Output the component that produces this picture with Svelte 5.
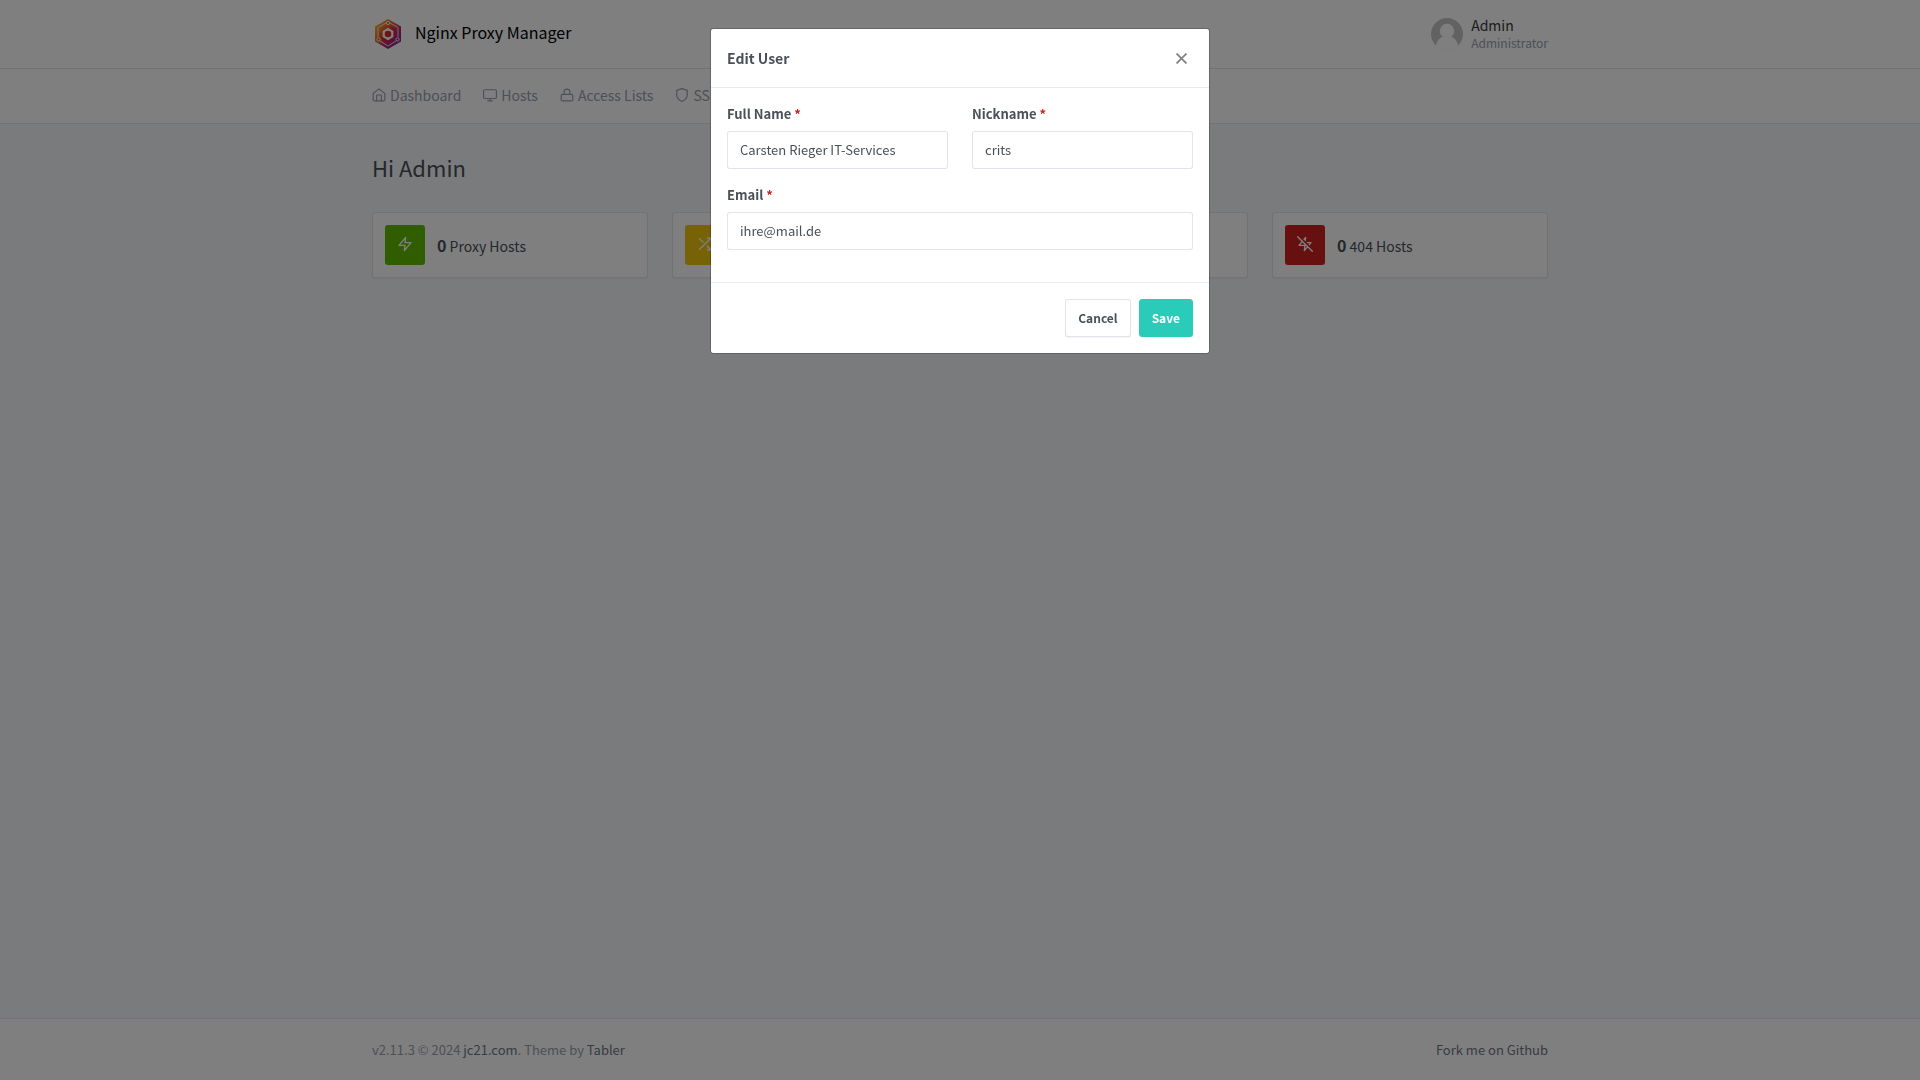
<script>
    // top navigation entries
    const nav = [
        { icon: "home", title: "Dashboard" },
        { icon: "monitor", title: "Hosts" },
        { icon: "lock", title: "Access Lists" },
        { icon: "shield", title: "SSL Certificates" },
    ];

    // dashboard counters
    const stats = [
        { icon: "zap", color: "green", count: 0, title: "Proxy Hosts" },
        { icon: "shuffle", color: "yellow" },
        {},
        { icon: "zap-off", color: "red", count: 0, title: "404 Hosts" },
    ];

    let name = $state("Carsten Rieger IT-Services");
    let nickname = $state("crits");
    let email = $state("ihre@mail.de");
</script>

<svelte:head>
    <title>Nginx Proxy Manager</title>
</svelte:head>

{#snippet icon(type)}
    <svg class="icon" viewBox="0 0 24 24" aria-hidden="true">
        {#if type === "home"}
            <path d="M2 9.500V20a2 2 0 0 0 2 2h16a2 2 0 0 0 2-2V9.500L12 1.500z" />
            <path d="M8 22V12h8v10" />
        {:else if type === "monitor"}
            <rect x="1" y="3" width="22" height="15" rx="2" />
            <path d="M8 22h8M12 18v4" />
        {:else if type === "lock"}
            <rect x="2" y="11" width="20" height="11" rx="2" />
            <path d="M7 11V7a5 5 0 0 1 10 0v4" />
        {:else if type === "shield"}
            <path d="M12 23s9-4 9-11V4l-9-3-9 3v8c0 7 9 11 9 11z" />
        {:else if type === "zap"}
            <path d="M13 2L3 14h9l-1 8 10-12h-9z" />
        {:else if type === "shuffle"}
            <path d="M16 3h5v5M4 20L21 3M21 16v5h-5M15 15l6 6M4 4l5 5" />
        {:else if type === "zap-off"}
            <path d="M12.400 6.800L13 2l-2.400 2.900M18.600 12.900L21 10h-5.300M8 8l-5 6h9l-1 8 5-6M1 1l22 22" />
        {/if}
    </svg>
{/snippet}

<div class="page">
    <header class="header">
        <div class="container">
            <a class="brand" href="/">
                <svg class="logo" viewBox="0 0 32 32" aria-hidden="true">
                    <defs>
                        <linearGradient id="rim" x1="0" y1="0" x2="1" y2="1">
                            <stop offset="0" stop-color="#ffc81f" />
                            <stop offset="0.4" stop-color="#e8662b" />
                            <stop offset="0.65" stop-color="#b52378" />
                            <stop offset="1" stop-color="#662d91" />
                        </linearGradient>
                        <linearGradient id="disc" x1="0" y1="0" x2="1" y2="1">
                            <stop offset="0" stop-color="#f7931e" />
                            <stop offset="0.5" stop-color="#e0262e" />
                            <stop offset="1" stop-color="#93278f" />
                        </linearGradient>
                    </defs>
                    <path fill="url(#rim)" d="M16 1l13 7.500v15L16 31 3 23.500v-15z" />
                    <path fill="none" stroke="#f3dfe6" stroke-width="1" d="M14 5L6 9.500V19M18 5l8 4.500V19M8 23l8 5 8-5" />
                    <circle cx="16" cy="16" r="8.500" fill="url(#disc)" />
                    <path fill="#fff" d="M16 9.800l5.400 3.100v6.200L16 22.200l-5.400-3.100v-6.200z" />
                    <circle cx="16" cy="16" r="3.300" fill="#e0262e" />
                    <g fill="#d8542f" stroke="#fff" stroke-width="1">
                        <circle cx="16" cy="5" r="1.600" />
                        <circle cx="6.500" cy="21.500" r="1.600" />
                        <circle cx="25.500" cy="21.500" r="1.600" fill="#93278f" />
                    </g>
                </svg>
                <span>Nginx Proxy Manager</span>
            </a>
            <a class="account" href="/profile">
                <svg class="avatar" viewBox="0 0 32 32" aria-hidden="true">
                    <circle cx="16" cy="16" r="16" fill="#c5c5c5" />
                    <circle cx="16" cy="13" r="7.200" fill="#fff" />
                    <path fill="#fff" d="M4.800 27.500C6 22.500 9 19.500 12 18.500h8c3 1 6 4 7.200 9C24 30.500 20 32 16 32S8 30.500 4.800 27.500z" />
                </svg>
                <span class="who">
                    <span>Admin</span>
                    <small>Administrator</small>
                </span>
            </a>
        </div>
    </header>

    <nav class="menu">
        <div class="container">
            <ul>
                {#each nav as item}
                    <li><a href="/">{@render icon(item.icon)}{item.title}</a></li>
                {/each}
            </ul>
        </div>
    </nav>

    <main class="container">
        <h1>Hi Admin</h1>
        <div class="cards">
            {#each stats as stat}
                <div class="card">
                    {#if stat.icon}
                        <span class="stamp {stat.color}">{@render icon(stat.icon)}</span>
                    {/if}
                    {#if stat.title}
                        <a href="/"><b>{stat.count}</b> {stat.title}</a>
                    {/if}
                </div>
            {/each}
        </div>
    </main>

    <footer class="footer">
        <div class="container">
            <div>v2.11.3 © 2024 <a href="/">jc21.com</a>. Theme by <a href="/">Tabler</a></div>
            <a href="/">Fork me on Github</a>
        </div>
    </footer>
</div>

<div class="backdrop">
    <div class="modal" role="dialog" aria-modal="true" aria-labelledby="modal-title">
        <div class="modal-header">
            <h5 id="modal-title">Edit User</h5>
            <button type="button" class="close" aria-label="Close">
                <svg viewBox="0 0 10 10" aria-hidden="true"><path d="M0.500 0.500l9 9M9.500 0.500l-9 9" /></svg>
            </button>
        </div>
        <form>
            <div class="modal-body">
                <div class="group">
                    <label for="name">Full Name <span class="required">*</span></label>
                    <input id="name" type="text" bind:value={name} required />
                </div>
                <div class="group">
                    <label for="nickname">Nickname <span class="required">*</span></label>
                    <input id="nickname" type="text" bind:value={nickname} required />
                </div>
                <div class="group wide">
                    <label for="email">Email <span class="required">*</span></label>
                    <input id="email" type="email" bind:value={email} required />
                </div>
            </div>
            <div class="modal-footer">
                <button type="button" class="btn">Cancel</button>
                <button type="button" class="btn save">Save</button>
            </div>
        </form>
    </div>
</div>

<style>
    :global(body) {
        margin: 0;
        background: #f5f7fb;
        color: #495057;
        font-family: "Source Sans Pro", "Noto Sans CJK SC", sans-serif;
        font-size: 14px;
        line-height: 22px;
    }

    * {
        box-sizing: border-box;
    }

    a {
        color: inherit;
        text-decoration: none;
    }

    .page {
        display: flex;
        flex-direction: column;
        min-height: 100vh;
    }

    .container {
        width: 100%;
        max-width: 1200px;
        margin: 0 auto;
        padding: 0 12px;
    }

    .icon {
        width: 14px;
        height: 14px;
        fill: none;
        stroke: currentColor;
        stroke-width: 2;
        stroke-linecap: round;
        stroke-linejoin: round;
    }

    /* Header */
    .header {
        padding: 12px 0;
        background: #fff;
        border-bottom: 1px solid rgba(0, 40, 100, 0.12);
    }

    .header .container {
        display: flex;
        align-items: center;
        justify-content: space-between;
        min-height: 44px;
    }

    .brand {
        display: flex;
        align-items: center;
        gap: 11px;
        color: #000;
        font-size: 16px;
    }

    .brand span {
        padding-bottom: 4px;
    }

    .logo {
        width: 32px;
        height: 32px;
    }

    .account {
        display: flex;
        align-items: center;
        gap: 8px;
    }

    .avatar {
        width: 32px;
        height: 32px;
    }

    .who {
        display: flex;
        flex-direction: column;
        padding-bottom: 1px;
        color: #343a40;
        line-height: 18px;
    }

    .who small {
        color: #9aa0ac;
        font-size: 12px;
    }

    /* Navigation */
    .menu {
        background: #fff;
        border-bottom: 1px solid rgba(0, 40, 100, 0.12);
    }

    .menu ul {
        display: flex;
        gap: 22px;
        margin: 0;
        padding: 0;
        list-style: none;
    }

    .menu a {
        display: flex;
        align-items: center;
        gap: 4px;
        padding: 15px 0 17px;
        color: #9aa0ac;
    }

    /* Content */
    main {
        flex: 1;
    }

    h1 {
        margin: 28px 0 30px;
        font-size: 22px;
        font-weight: 400;
        line-height: 30px;
    }

    .cards {
        display: grid;
        grid-template-columns: repeat(4, 1fr);
        gap: 24px;
    }

    .card {
        display: flex;
        align-items: center;
        gap: 12px;
        min-height: 66px;
        padding: 12px;
        background: #fff;
        border: 1px solid rgba(0, 40, 100, 0.12);
        border-radius: 3px;
        box-shadow: 0 1px 2px rgba(0, 0, 0, 0.05);
    }

    .card b {
        font-size: 16px;
    }

    .stamp {
        display: flex;
        align-items: center;
        justify-content: center;
        width: 40px;
        height: 40px;
        padding-bottom: 2px;
        border-radius: 3px;
        color: #fff;
    }

    .stamp :global(.icon) {
        width: 16px;
        height: 16px;
    }

    .green {
        background: #5eba00;
    }

    .yellow {
        background: #f1c40f;
    }

    .red {
        background: #cd201f;
    }

    /* Footer */
    .footer {
        padding: 20px 0;
        background: #fff;
        border-top: 1px solid rgba(0, 40, 100, 0.12);
        color: #9aa0ac;
        font-size: 13px;
        line-height: 21px;
    }

    .footer .container {
        display: flex;
        justify-content: space-between;
    }

    .footer a {
        color: #6e7687;
    }

    /* Modal */
    .backdrop {
        position: fixed;
        inset: 0;
        padding: 28px 0;
        background: rgba(0, 0, 0, 0.5);
        overflow: auto;
    }

    .modal {
        max-width: 500px;
        margin: 0 auto;
        background: #fff;
        background-clip: padding-box;
        border: 1px solid rgba(0, 0, 0, 0.2);
        border-radius: 3px;
    }

    .modal-header {
        display: flex;
        align-items: center;
        justify-content: space-between;
        padding: 16px;
        border-bottom: 1px solid #e9ecef;
    }

    h5 {
        margin: 0;
        font-size: 14px;
        font-weight: 700;
        line-height: 26px;
    }

    .close {
        display: flex;
        padding: 6px;
        background: none;
        border: 0;
    }

    .close svg {
        width: 11px;
        height: 11px;
        fill: none;
        stroke: #808080;
        stroke-width: 1.6;
    }

    .modal-body {
        display: grid;
        grid-template-columns: 1fr 1fr;
        gap: 16px 24px;
        padding: 16px 16px 32px;
    }

    .wide {
        grid-column: span 2;
    }

    label {
        display: block;
        margin-bottom: 8px;
        font-size: 13px;
        font-weight: 700;
        line-height: 19px;
    }

    .required {
        color: #cd201f;
    }

    input {
        display: block;
        width: 100%;
        height: 38px;
        padding: 6px 12px 8px;
        border: 1px solid rgba(0, 40, 100, 0.12);
        border-radius: 3px;
        background: #fff;
        color: #495057;
        font: inherit;
        font-size: 13px;
    }

    .modal-footer {
        display: flex;
        justify-content: flex-end;
        gap: 8px;
        padding: 16px;
        border-top: 1px solid #e9ecef;
    }

    .btn {
        height: 38px;
        padding: 0 12px;
        border: 1px solid rgba(0, 40, 100, 0.12);
        border-radius: 3px;
        background: #fff;
        box-shadow: 0 1px 1px rgba(0, 0, 0, 0.05);
        color: #495057;
        font: inherit;
        font-size: 12px;
        font-weight: 700;
    }

    .save {
        background: #2bcbba;
        border-color: #2bcbba;
        color: #fff;
    }
</style>
